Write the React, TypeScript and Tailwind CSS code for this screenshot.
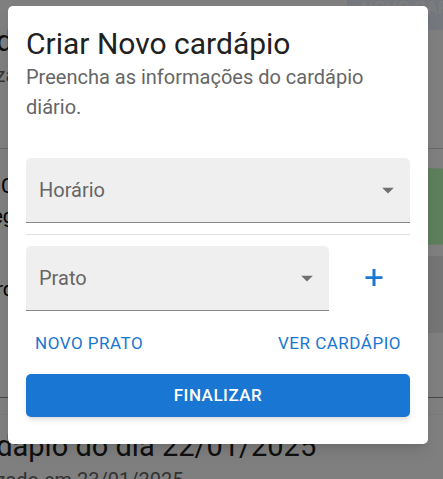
import { useState } from "react";

function ArrowDropDown() {
  return (
    <svg
      viewBox="0 0 24 24"
      fill="currentColor"
      aria-hidden="true"
      className="pointer-events-none absolute right-2 top-[18px] size-7 text-[#707070]"
    >
      <path d="m7 10 5 5 5-5z" />
    </svg>
  );
}

type FieldProps = { id: string; label: string; options: string[] };

function SelectField({ id, label, options }: FieldProps) {
  const [value, setValue] = useState("");
  return (
    <div className="relative min-w-0 flex-1">
      <select
        id={id}
        value={value}
        onChange={(e) => setValue(e.target.value)}
        className="block h-[65px] w-full appearance-none rounded-t-[5px] border-b border-[#868686] bg-[#efefef] px-[13px] pt-4 text-xl text-[#212121] outline-none"
      >
        <option value="" />
        {options.map((option) => (
          <option key={option}>{option}</option>
        ))}
      </select>
      <label
        htmlFor={id}
        className={
          value
            ? "pointer-events-none absolute left-[13px] top-1 text-sm text-[#666]"
            : "pointer-events-none absolute top-0 left-[13px] flex h-16 items-center text-xl text-[#666]"
        }
      >
        {label}
      </label>
      <ArrowDropDown />
    </div>
  );
}

function MenuHeading({ date, finished }: { date: string; finished: string }) {
  return (
    <div className="whitespace-nowrap">
      <h2 className="text-[29px] leading-[38px] text-[#212121]">Cardápio do dia {date}</h2>
      <p className="text-xl leading-[30px] text-[#666]">Realizado em {finished}</p>
    </div>
  );
}

function MenuPage() {
  return (
    <main className="-ml-12 h-full overflow-hidden bg-white" aria-hidden="true">
      <div className="flex h-[30px] justify-end">
        <span className="-mr-16 flex h-[30px] w-40 justify-center bg-[#e8f0fc] pl-2 text-lg leading-4 font-medium whitespace-nowrap text-[#fafafa]">
          NOVO CARDÁPIO
        </span>
      </div>
      <div className="-mt-2">
        <MenuHeading date="23/01/2025" finished="24/01/2025" />
      </div>
      <div className="mt-[58px] flex h-[250px] justify-between border-y border-t-[#d0d0d0] border-b-[#909090]">
        <div className="w-[62px] pt-[22px] text-right text-xl leading-[30px] text-black">
          <p>C</p>
          <p>eg</p>
          <p className="mt-[43px]">rd</p>
        </div>
        <div className="-mr-10 flex w-40 flex-col gap-[11px] pt-[19px]">
          <div className="h-[77px] rounded-[50%/6%] bg-[#bcffb6]" />
          <div className="h-[77px] bg-[#ebebeb]" />
        </div>
      </div>
      <div className="mt-4 border-t border-[#f4f4f4] pt-3">
        <MenuHeading date="22/01/2025" finished="23/01/2025" />
      </div>
    </main>
  );
}

export default function App() {
  return (
    <div className="relative h-screen overflow-hidden font-[Roboto,sans-serif]">
      <MenuPage />
      <div className="absolute inset-0 bg-black/50 pt-[6px] pr-[15px] pl-2">
        <section
          role="dialog"
          aria-labelledby="dialog-title"
          className="rounded-[5px] bg-white px-[18px] pt-5 pb-[27px] shadow-lg"
        >
          <h1 id="dialog-title" className="text-3xl leading-9 text-[#212121]">
            Criar Novo cardápio
          </h1>
          <p className="text-xl leading-[30px] text-[#666]">
            Preencha as informações do cardápio diário.
          </p>
          <form className="mt-9" onSubmit={(e) => e.preventDefault()}>
            <div className="flex">
              <SelectField id="horario" label="Horário" options={["Almoço", "Jantar"]} />
            </div>
            <hr className="my-[11px] border-[#e0e0e0]" />
            <div className="flex items-start gap-[9px]">
              <SelectField id="prato" label="Prato" options={["Arroz", "Feijão"]} />
              <button
                type="button"
                aria-label="Adicionar prato"
                className="flex h-16 w-[72px] items-center justify-center text-[#1976d2]"
              >
                <svg viewBox="0 0 28 28" fill="currentColor" className="size-7">
                  <path d="M12.5 5h3v7.2H22.500v2.800h-7v7h-3v-7H5.500v-2.800h7z" />
                </svg>
              </button>
            </div>
            <div className="mt-3 flex justify-between text-[#1976d2]">
              <button type="button" className="h-[42px] px-[9px] text-[17px] tracking-[0.03em]">
                NOVO PRATO
              </button>
              <button type="button" className="h-[42px] px-[9px] text-[17px] tracking-[0.03em]">
                VER CARDÁPIO
              </button>
            </div>
            <button
              type="submit"
              className="mt-[9px] h-[43px] w-full rounded-[5px] bg-[#1976d2] text-[17px] font-medium tracking-[0.03em] text-white shadow-md"
            >
              FINALIZAR
            </button>
          </form>
        </section>
      </div>
    </div>
  );
}
